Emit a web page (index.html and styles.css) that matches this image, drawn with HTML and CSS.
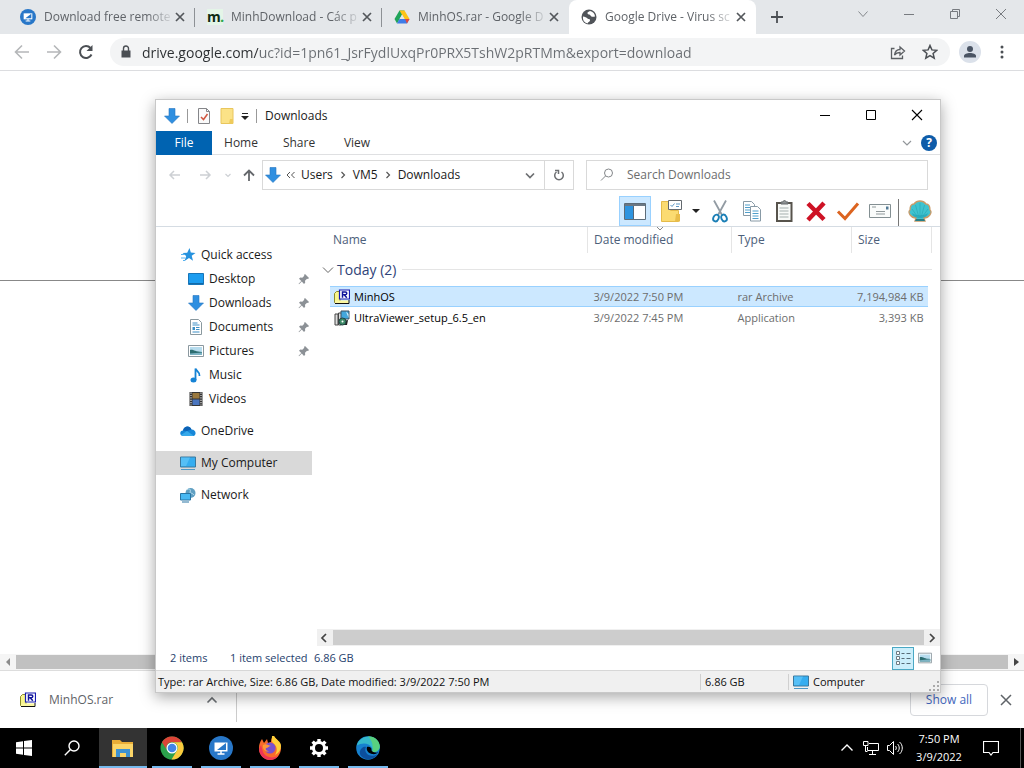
FILE: index.html
```html
<!DOCTYPE html>
<html lang="en">
<head>
    <meta charset="UTF-8">
    <title>Desktop</title>
    <link rel="stylesheet" href="styles.css">
</head>
<body>
    <!-- shared icons -->
    <svg class="sprite" aria-hidden="true">
        <symbol id="i-down" viewBox="0 0 16 16"><path d="M5 0.5h6v7.500h4.500L8 15.500 0.500 8H5z" fill="#2f8fe0" stroke="#2676bf" stroke-width=".6"/></symbol>
        <symbol id="i-close" viewBox="0 0 16 16"><path d="M4 4l8 8M12 4l-8 8" fill="none" stroke="currentColor" stroke-width="1.700"/></symbol>
        <symbol id="i-pin" viewBox="0 0 12 12"><path d="M7 1l4 4-1 1-1-.3-2 2 .2 2L6 11 3.800 8.500 1 11.200.600 10.800 3.300 8 1 5.800l1.300-1.200 2 .2 2-2L6 2z" fill="#8c9196"/></symbol>
        <symbol id="i-pc" viewBox="0 0 16 16"><path d="M.5 2h15v10H.5z" fill="#35adf0" stroke="#3b789d"/><path d="M1 2.500h9L6 11H1z" fill="#6acbfa" opacity=".6"/><path d="M1 14.500h14" stroke="#4c97c5"/></symbol>
        <symbol id="i-rar" viewBox="0 0 16 16"><path d="M.5 4.500l2-2H6v11H.5z" fill="#f8f58c" stroke="#8b8b2b"/><path d="M1 14h13.500v-2.500H1z" fill="#fbf7a0"/><path d="M1 14.500h14V11" fill="none" stroke="#111"/><path d="M5.500 1h10v9h-10z" fill="#fff" stroke="#161ab0" stroke-width="1.200"/><path d="M8.500 8.800V3h2.800c2 0 2 2.700 0 2.700H9M10.500 6l2.300 2.800" fill="none" stroke="#10149a" stroke-width="1.500"/></symbol>
        <symbol id="i-pic" viewBox="0 0 16 16"><path d="M.5 2.500h15v11H.5z" fill="#fff" stroke="#8b989f"/><path d="M2 4h12v8H2z" fill="#b7dcee"/><path d="M2 7c3-1 5 2 12 2v3H2z" fill="#2c6d71"/><path d="M2 10.500l12-1V12H2z" fill="#7cb3c4"/></symbol>
        <symbol id="i-uv" viewBox="0 0 24 24"><circle cx="12" cy="12" r="12" fill="#2877c8"/><path d="M5.500 6.500h13v9h-13z" fill="#fff"/><path d="M8 14l9-7v7z" fill="#2877c8"/><path d="M12 15v3M8.500 18h7" stroke="#fff" stroke-width="1.500"/></symbol>
    </svg>

    <div class="browser">
        <div class="tab-strip">
            <div class="tab">
                <svg class="icon"><use href="#i-uv"/></svg>
                <span class="tab-title">Download free remote</span>
                <button class="tab-close" aria-label="Close tab"><svg class="icon"><use href="#i-close"/></svg></button>
            </div>
            <div class="tab">
                <span class="favicon-m">m<i>.</i></span>
                <span class="tab-title">MinhDownload - Các p</span>
                <button class="tab-close" aria-label="Close tab"><svg class="icon"><use href="#i-close"/></svg></button>
            </div>
            <div class="tab">
                <svg class="icon" viewBox="0 0 16 16"><path d="M5.500 1.500h5L6 9.500l-3 5L.5 10z" fill="#20a45a"/><path d="M5.500 1.500h5l5 8.500h-5z" fill="#fdc317"/><path d="M5.500 10h10L13 14.500H3z" fill="#3e7ce8"/><path d="M11 10h4.500L13 14.500z" fill="#e4483c"/><path d="M8 5.500L5.500 10h5z" fill="#e4e7ea"/></svg>
                <span class="tab-title">MinhOS.rar - Google D</span>
                <button class="tab-close" aria-label="Close tab"><svg class="icon"><use href="#i-close"/></svg></button>
            </div>
            <div class="tab active">
                <svg class="icon" viewBox="0 0 16 16"><circle cx="8" cy="8" r="7.500" fill="#505459"/><path d="M2 7.500c2 0 3.500 1 4.500 2s3 0 2.500 2-2 1-2.500 3C3 13.500 1.500 11 2 7.500zM9 2c-1 1-3 1-2.500 2.500S9 5 9.500 6.500 12 8 14 7.500C14 5 12 2.500 9 2z" fill="#fff"/></svg>
                <span class="tab-title">Google Drive - Virus sc</span>
                <button class="tab-close" aria-label="Close tab"><svg class="icon"><use href="#i-close"/></svg></button>
            </div>
            <button class="new-tab" aria-label="New tab"><svg class="icon" viewBox="0 0 16 16"><path d="M8 2v12M2 8h12" stroke="#4b4f54" stroke-width="1.800"/></svg></button>
            <div class="browser-controls">
                <button aria-label="Search tabs"><svg class="icon" viewBox="0 0 16 16"><path d="M3.500 5.500L8 10.500l4.500-5" fill="none" stroke="#85898d"/></svg></button>
                <button aria-label="Minimize"><svg class="icon" viewBox="0 0 16 16"><path d="M3 8.500h10" stroke="#777b80"/></svg></button>
                <button aria-label="Restore"><svg class="icon" viewBox="0 0 16 16"><path d="M3.500 5.500h7v7h-7zM5.500 5.500v-2h7v7h-2" fill="none" stroke="#777b80"/></svg></button>
                <button aria-label="Close"><svg class="icon" viewBox="0 0 16 16"><path d="M3 3l10 10M13 3L3 13" stroke="#777b80"/></svg></button>
            </div>
        </div>

        <div class="nav-bar">
            <button class="nav-btn" aria-label="Back"><svg class="icon" viewBox="0 0 16 16"><path d="M15 8H1.500M8 1.500L1.500 8 8 14.500" fill="none" stroke="#b5b7b9" stroke-width="1.600"/></svg></button>
            <button class="nav-btn" aria-label="Forward"><svg class="icon" viewBox="0 0 16 16"><path d="M1 8h13.500M8 1.500L14.500 8 8 14.500" fill="none" stroke="#b5b7b9" stroke-width="1.600"/></svg></button>
            <button class="nav-btn" aria-label="Reload"><svg class="icon" viewBox="0 0 16 16"><path d="M13.500 10.500A6 6 0 1 1 12.500 4" fill="none" stroke="#4b4f54" stroke-width="2"/><path d="M14.500 1v6h-6z" fill="#4b4f54"/></svg></button>
            <div class="omnibox">
                <svg class="icon" viewBox="0 0 16 16"><path d="M3.500 6.500h9v7h-9z" fill="#4b4f54"/><path d="M5.500 7V4.500a2.500 2.500 0 0 1 5 0V7" fill="none" stroke="#4b4f54" stroke-width="1.400"/></svg>
                <input type="text" aria-label="Address" value="drive.google.com/uc?id=1pn61_JsrFydlUxqPr0PRX5TshW2pRTMm&amp;export=download">
                <button aria-label="Share"><svg class="icon" viewBox="0 0 16 16"><path d="M4.500 4.500h-3v10h11v-3" fill="none" stroke="#5b5f63" stroke-width="1.300"/><path d="M4.500 11C5 7.500 7 5.500 10 5.500V3l4.500 4L10 11V8.500C7.500 8.500 6 9 4.500 11z" fill="none" stroke="#5b5f63" stroke-width="1.300"/></svg></button>
                <button aria-label="Bookmark"><svg class="icon" viewBox="0 0 16 16"><path d="M8 1.500l1.900 4.400 4.800.4-3.600 3.200 1.100 4.700L8 11.700l-4.200 2.500 1.100-4.700L1.300 6.300l4.800-.4z" fill="none" stroke="#4b4f54" stroke-width="1.500"/></svg></button>
            </div>
            <button class="profile" aria-label="Profile"><svg class="icon" viewBox="0 0 16 16"><circle cx="8" cy="5" r="3" fill="#4a5464"/><path d="M2 13.500V12c0-4 12-4 12 0v1.500z" fill="#4a5464"/></svg></button>
            <button class="nav-btn" aria-label="Menu"><svg class="icon" viewBox="0 0 16 16"><g fill="#4b4f54"><circle cx="8" cy="3" r="1.500"/><circle cx="8" cy="8" r="1.500"/><circle cx="8" cy="13" r="1.500"/></g></svg></button>
        </div>

        <div class="page"><hr></div>

        <div class="page-scroll">
            <svg class="icon" viewBox="0 0 16 16"><path d="M10 4v8L6 8z" fill="#8c8c8c"/></svg>
            <div class="thumb"></div>
            <svg class="icon" viewBox="0 0 16 16"><path d="M6 4v8l5-4z" fill="#444"/></svg>
        </div>

        <div class="shelf">
            <div class="download">
                <svg class="icon"><use href="#i-rar"/></svg>
                <span>MinhOS.rar</span>
                <button aria-label="Options"><svg class="icon" viewBox="0 0 16 16"><path d="M3.500 10.500L8 6l4.500 4.500" fill="none" stroke="#6b6f73" stroke-width="1.600"/></svg></button>
            </div>
            <button class="show-all">Show all</button>
            <button class="shelf-close" aria-label="Close"><svg class="icon" viewBox="0 0 16 16"><path d="M3 3l10 10M13 3L3 13" stroke="#5f6368" stroke-width="1.500"/></svg></button>
        </div>
    </div>

    <div class="explorer">
        <div class="title-bar">
            <svg class="icon"><use href="#i-down"/></svg>
            <span class="bar"></span>
            <svg class="icon" viewBox="0 0 16 16"><path d="M2.500.5h8l3 3v12h-11z" fill="#fafafa" stroke="#85868a"/><path d="M10.500.5v3h3" fill="none" stroke="#85868a"/><path d="M5 9l2.500 2.500L11.500 6" fill="none" stroke="#d0563f" stroke-width="1.500"/></svg>
            <svg class="icon" viewBox="0 0 16 16"><path d="M2 .5h12v15H2z" fill="#fbe287" stroke="#e9c65c"/><path d="M11 11h3v4.500h-4z" fill="#efcb5b"/></svg>
            <svg class="caret" viewBox="0 0 8 8"><path d="M1 1.500h6" stroke="#222"/><path d="M0 4h8L4 8z" fill="#222"/></svg>
            <span class="bar"></span>
            <span class="title">Downloads</span>
            <div class="win-controls">
                <button aria-label="Minimize"><svg class="icon" viewBox="0 0 16 16"><path d="M3 8.500h10" stroke="#000"/></svg></button>
                <button aria-label="Maximize"><svg class="icon" viewBox="0 0 16 16"><path d="M3.500 3.500h9v9h-9z" fill="none" stroke="#000"/></svg></button>
                <button aria-label="Close"><svg class="icon" viewBox="0 0 16 16"><path d="M3 3l10 10M13 3L3 13" stroke="#000" stroke-width="1.100"/></svg></button>
            </div>
        </div>

        <div class="ribbon">
            <button class="file">File</button>
            <button>Home</button>
            <button>Share</button>
            <button>View</button>
            <svg class="icon ribbon-toggle" viewBox="0 0 16 16"><path d="M4 6l4 4 4-4" fill="none" stroke="#92969a" stroke-width="1.200"/></svg>
            <button class="help" aria-label="Help">?</button>
        </div>

        <div class="address-row">
            <button aria-label="Back"><svg class="icon" viewBox="0 0 16 16"><path d="M13 8H3M7 4L3 8l4 4" fill="none" stroke="#cdd0d4" stroke-width="1.500"/></svg></button>
            <button aria-label="Forward"><svg class="icon" viewBox="0 0 16 16"><path d="M3 8h10M9 4l4 4-4 4" fill="none" stroke="#cdd0d4" stroke-width="1.500"/></svg></button>
            <button class="recent" aria-label="Recent"><svg class="icon" viewBox="0 0 16 16"><path d="M5.500 7L8 9.500 10.500 7" fill="none" stroke="#cdd0d4" stroke-width="1.200"/></svg></button>
            <button class="up" aria-label="Up"><svg class="icon" viewBox="0 0 16 16"><path d="M8 14V4M3 8.500l5-5 5 5" fill="none" stroke="#65686c" stroke-width="1.800"/></svg></button>
            <div class="path">
                <svg class="icon"><use href="#i-down"/></svg>
                <svg class="chev" viewBox="0 0 12 12"><path d="M5 3L2 6l3 3M9.500 3l-3 3 3 3" fill="none" stroke="#555"/></svg>
                <span>Users</span>
                <svg class="chev" viewBox="0 0 12 12"><path d="M4.500 3l3 3-3 3" fill="none" stroke="#555" stroke-width="1.200"/></svg>
                <span>VM5</span>
                <svg class="chev" viewBox="0 0 12 12"><path d="M4.500 3l3 3-3 3" fill="none" stroke="#555" stroke-width="1.200"/></svg>
                <span>Downloads</span>
                <button class="history" aria-label="Previous locations"><svg class="icon" viewBox="0 0 16 16"><path d="M4 6.500l4 4 4-4" fill="none" stroke="#6d6f72" stroke-width="1.700"/></svg></button>
                <button class="refresh" aria-label="Refresh"><svg class="icon" viewBox="0 0 16 16"><path d="M10.500 5a4.300 4.300 0 1 1-5 0M4 3.500h3.500V7" fill="none" stroke="#6d6f72" stroke-width="1.500"/></svg></button>
            </div>
            <div class="search">
                <svg class="icon" viewBox="0 0 16 16"><circle cx="9.500" cy="6" r="4" fill="none" stroke="#84878a"/><path d="M6.500 9L2 13.500" stroke="#84878a"/></svg>
                <input type="text" aria-label="Search Downloads" placeholder="Search Downloads">
            </div>
        </div>

        <div class="tools">
            <button class="on" aria-label="Navigation pane"><svg class="tool-icon" viewBox="0 0 24 24"><path d="M1.500 4.500h21v16h-21z" fill="#fff" stroke="#5d6c78"/><path d="M2 5h20v2H2z" fill="#6b7884"/><path d="M2 7h8.500v13H2z" fill="#2e94df"/><path d="M10.500 7v13" stroke="#567"/></svg></button>
            <button class="wide" aria-label="Properties"><svg class="tool-icon" viewBox="0 0 24 24"><path d="M1.500 2.500h9v9h8v11h-17z" fill="#fbdb71" stroke="#e5bb4a"/><path d="M16 15h4v7.500h-5z" fill="#e9bd4a"/><path d="M8.500 1.500h13v9h-13z" fill="#fff" stroke="#63696e"/><path d="M10.500 6l1.500 1.500 2.500-3M16 5h4M16 7.500h3" fill="none" stroke="#5d97c5"/></svg><svg class="caret" viewBox="0 0 8 8"><path d="M0 2h8L4 6z" fill="#222"/></svg></button>
            <button aria-label="Cut"><svg class="tool-icon" viewBox="0 0 24 24"><path d="M6 1.500L14 16M18 1.500L10 16" stroke="#929ba3" stroke-width="1.800"/><ellipse cx="8" cy="19" rx="2.600" ry="3.500" transform="rotate(25 8 19)" fill="none" stroke="#1b7fb6" stroke-width="1.900"/><ellipse cx="16" cy="19" rx="2.600" ry="3.500" transform="rotate(-25 16 19)" fill="none" stroke="#1b7fb6" stroke-width="1.900"/></svg></button>
            <button aria-label="Copy"><svg class="tool-icon" viewBox="0 0 24 24"><g fill="#fff" stroke="#889aa6"><path d="M3.500 2.500h8l3 3v11h-11z"/><path d="M10.500 7.500h7l3 3v11.500h-10z"/></g><path d="M5 6h5M5 8.500h5M5 11h5M5 13.500h5M12.500 12h6M12.500 14.500h6M12.500 17h6M12.500 19.500h6" stroke="#4f9fcb"/></svg></button>
            <button aria-label="Paste"><svg class="tool-icon" viewBox="0 0 24 24"><path d="M5 4h14.500v18H5z" fill="#f8faf8" stroke="#57534c" stroke-width="2"/><path d="M9 5V3h2c0-2 3-2 3 0h2v2z" fill="#8d9293" stroke="#65686a"/><path d="M7.500 9h9M7.500 12h9M7.500 15h9M7.500 18h9" stroke="#a4afae"/></svg></button>
            <button aria-label="Delete"><svg class="tool-icon" viewBox="0 0 24 24"><path d="M4 4.500l16 16M20 4L4 21" stroke="#ce1225" stroke-width="4.500"/></svg></button>
            <button aria-label="Rename"><svg class="tool-icon" viewBox="0 0 24 24"><path d="M2 12.500l7 7L22 4.500" fill="none" stroke="#dc6420" stroke-width="3"/></svg></button>
            <button aria-label="Mail"><svg class="tool-icon" viewBox="0 0 24 24"><path d="M1.500 5.500h21v13h-21z" fill="#fafcfb" stroke="#838f92"/><path d="M4 8h4M8 12.500h9M8 15h9" stroke="#90999b"/><path d="M18 7.500h2.500v3H18z" fill="#527a96"/></svg></button>
            <span class="tool-bar"></span>
            <button class="shell" aria-label="Classic Shell"><svg class="tool-icon" viewBox="0 0 24 24"><path d="M7 22l1-3c-5 0-9-6-6-8 0-4 2-6 4-6 3-4 9-4 12 0 2 0 4 2 4 6 3 2-1 8-6 8l1 3z" fill="#3fc3d0" stroke="#c99a68" stroke-width="1.300"/><path d="M4 14c1 4 4 5 8 5s7-1 8-5c-4 3-12 3-16 0z" fill="#1c9fb4" opacity=".6"/><path d="M12 18V4M10.500 17L7.500 6M13.500 17L16.500 6M9 17l-5-7M15 17l5-7" stroke="#2aa5b0" stroke-width=".6"/><path d="M8 20h8l1 2H7z" fill="#267e85"/></svg></button>
        </div>

        <div class="panes">
            <ul class="sidebar">
                <li><a href="#"><svg class="icon" viewBox="0 0 16 16"><path d="M9.500 1l1.300 4.500 4.700.5-3.800 2.800 1.300 5L9 11l-4.500 3 1.700-5L2.500 6l4.700-.3z" fill="#2692de"/><path d="M1 7.500h4M1 11h4M3 13.500h2" stroke="#58b2ee"/></svg>Quick access</a></li>
                <li class="sub"><a href="#"><svg class="icon" viewBox="0 0 16 16"><path d="M.5 2.500h15v11H.5z" fill="#1c9df0" stroke="#1775b8"/><path d="M1 12.500h14" stroke="#1269a7"/></svg>Desktop</a><svg class="pin"><use href="#i-pin"/></svg></li>
                <li class="sub"><a href="#"><svg class="icon"><use href="#i-down"/></svg>Downloads</a><svg class="pin"><use href="#i-pin"/></svg></li>
                <li class="sub"><a href="#"><svg class="icon" viewBox="0 0 16 16"><path d="M2.500.5h8l3 3v12h-11z" fill="#fff" stroke="#8a999f"/><path d="M4.500 4h5M4.500 6h7M8 8.500h3.500M8 10.500h3.500M4.500 13h7" stroke="#3c8fc6"/><path d="M4.500 8h2.500v3H4.500z" fill="#3c8fc6"/></svg>Documents</a><svg class="pin"><use href="#i-pin"/></svg></li>
                <li class="sub"><a href="#"><svg class="icon"><use href="#i-pic"/></svg>Pictures</a><svg class="pin"><use href="#i-pin"/></svg></li>
                <li class="sub"><a href="#"><svg class="icon" viewBox="0 0 16 16"><path d="M7.500 13V1.500C8 4 12 4.500 11.500 9" fill="none" stroke="#1583d5" stroke-width="1.800"/><ellipse cx="5.500" cy="13" rx="3" ry="2.500" fill="#1583d5"/></svg>Music</a></li>
                <li class="sub"><a href="#"><svg class="icon" viewBox="0 0 16 16"><path d="M1.500 1h13v14h-13z" fill="#343434"/><path d="M4.500 2h7v5.500h-7z" fill="#9b793e"/><path d="M4.500 8.500h7V14h-7z" fill="#4a75bf"/><path d="M3 1.500v13M13 1.500v13" stroke="#ddd" stroke-width="1.200" stroke-dasharray="1.200 1.200"/></svg>Videos</a></li>
                <li class="root"><a href="#"><svg class="icon" viewBox="0 0 16 16"><path d="M3.500 13C-1 13-.5 7.500 3 7.500 4 2.500 10 2 11.500 6.500c5 0 5.500 6.500 1 6.500z" fill="#1787d8"/><path d="M1 12l6-4 7 5H3.500z" fill="#36a9ea"/><path d="M3 7.500C4 2.500 10 2 11.500 6.500L7 8z" fill="#0c62b5"/></svg>OneDrive</a></li>
                <li class="root selected"><a href="#"><svg class="icon"><use href="#i-pc"/></svg>My Computer</a></li>
                <li class="root"><a href="#"><svg class="icon" viewBox="0 0 16 16"><circle cx="10.500" cy="6" r="5" fill="#5f9fc2"/><path d="M7 3c3-3 4 1 3 2s3 1 4 3" fill="none" stroke="#bcdff0"/><path d="M.5 6.500h10v6.500H.5z" fill="#48b8f2" stroke="#2875a4"/><path d="M2 15h7" stroke="#2875a4"/></svg>Network</a></li>
            </ul>

            <div class="files">
                <table>
                    <colgroup><col class="c-gap"><col><col class="c-date"><col class="c-type"><col class="c-size"><col class="c-end"></colgroup>
                    <thead>
                        <tr><th class="gap"></th><th class="name">Name</th><th class="sorted">Date modified<svg class="sort" viewBox="0 0 8 4"><path d="M1 0l3 3 3-3" fill="none" stroke="#888"/></svg></th><th>Type</th><th>Size</th><th class="end"></th></tr>
                    </thead>
                    <tbody>
                        <tr class="group"><td colspan="6"><div class="group-label"><svg class="chev" viewBox="0 0 12 12"><path d="M1 3.500L6 8.500l5-5" fill="none" stroke="#666"/></svg><span>Today (2)</span></div></td></tr>
                        <tr class="row selected"><td class="gap"></td><td class="name"><svg class="icon"><use href="#i-rar"/></svg>MinhOS</td><td>3/9/2022 7:50 PM</td><td>rar Archive</td><td class="size">7,194,984 KB</td><td class="gap"></td></tr>
                        <tr class="row"><td class="gap"></td><td class="name"><svg class="icon" viewBox="0 0 16 16"><path d="M1 4h3v11H1zM4.500 3h3v12h-3z" fill="#ddd" stroke="#444"/><path d="M7 1h8v8H7z" fill="#43a7dc" stroke="#3c5060"/><path d="M12 1.500l2.500 2.500V8" fill="#d8f2ff"/><path d="M9 11l5-1-1 5H9z" fill="#222"/><circle cx="8.500" cy="11.500" r="3.500" fill="#3d8a67" stroke="#244"/><circle cx="8.500" cy="11.500" r="1" fill="#fff"/></svg>UltraViewer_setup_6.5_en</td><td>3/9/2022 7:45 PM</td><td>Application</td><td class="size">3,393 KB</td><td class="gap"></td></tr>
                    </tbody>
                </table>
                <div class="file-scroll">
                    <svg class="icon" viewBox="0 0 16 16"><path d="M9 4L5 8l4 4" fill="none" stroke="#444" stroke-width="1.700"/></svg>
                    <div class="thumb"></div>
                    <svg class="icon" viewBox="0 0 16 16"><path d="M6 4l4 4-4 4" fill="none" stroke="#444" stroke-width="1.700"/></svg>
                </div>
            </div>
        </div>

        <div class="status">
            <span class="count">2 items</span>
            <span class="picked">1 item selected</span>
            <span>6.86 GB</span>
            <button class="view on" aria-label="Details"><svg class="icon" viewBox="0 0 16 16"><path d="M1.500 1.500h3v3h-3zM1.500 6.500h3v3h-3zM1.500 11.500h3v3h-3z" fill="#fff" stroke="#6c7b83"/><path d="M6.500 3.500h3M11.500 3.500h4M6.500 8.500h3M11.500 8.500h4M6.500 13.500h3M11.500 13.500h4" stroke="#566b77"/></svg></button>
            <button class="view" aria-label="Large icons"><svg class="view-pic"><use href="#i-pic"/></svg></button>
        </div>

        <div class="info-bar">
            <span class="info">Type: rar Archive, Size: 6.86 GB, Date modified: 3/9/2022 7:50 PM</span>
            <span class="total">6.86 GB</span>
            <span class="zone"><svg class="icon"><use href="#i-pc"/></svg>Computer</span>
            <svg class="grip" viewBox="0 0 10 10"><g fill="#aaa"><path d="M8 0h2v2H8zM4 4h2v2H4zM8 4h2v2H8zM0 8h2v2H0zM4 8h2v2H4zM8 8h2v2H8z"/></g></svg>
        </div>
    </div>

    <div class="taskbar">
        <button class="start" aria-label="Start"><svg class="icon" viewBox="0 0 16 16"><path d="M0 2.200l7-1v6.300H0zM8 1l8-1v7.500H8zM0 8.500h7v6.300l-7-1zM8 8.500h8V16l-8-1z" fill="#fff"/></svg></button>
        <button class="find" aria-label="Search"><svg class="icon" viewBox="0 0 16 16"><circle cx="10" cy="6" r="5" fill="none" stroke="#fff" stroke-width="1.400"/><path d="M6.500 9.500L.8 15.200" stroke="#fff" stroke-width="1.400"/></svg></button>
        <button class="app current" aria-label="File Explorer"><svg class="app-icon" viewBox="0 0 24 24"><path d="M1 4h8l2 2h11v15H1z" fill="#e9ad37"/><path d="M2 8h20v13H2z" fill="#fbd568"/><path d="M5 13h14v8h-4v-4H9v4H5z" fill="#3e92d2"/></svg></button>
        <button class="app" aria-label="Chrome"><svg class="app-icon" viewBox="0 0 24 24"><circle cx="12" cy="12" r="11.500" fill="#2ba14b"/><path d="M2 6.200a11.500 11.500 0 0 1 20 0H12a5.500 5.500 0 0 0-5 8z" fill="#dc4437"/><path d="M22 6.200A11.500 11.500 0 0 1 11.500 23.500L17 14.500a5.500 5.500 0 0 0-5-8.300z" fill="#fbca3d"/><circle cx="12" cy="12" r="5.500" fill="#fff"/><circle cx="12" cy="12" r="4.300" fill="#4285e8"/></svg></button>
        <button class="app" aria-label="UltraViewer"><svg class="app-icon"><use href="#i-uv"/></svg></button>
        <button class="app" aria-label="Firefox"><svg class="app-icon" viewBox="0 0 24 24"><path d="M1 12c0-4 1-6 3-9l2 4 3-4 1 4 3-1c0-3 1-5 3-6 1 3 7 6 7 12 0 7-5 12-11 12S1 19 1 12z" fill="#fa6b2b"/><path d="M14 0c0 3-1 4 1 7 4 3 5 7 2 12 4-2 6-5 6-9C23 5 18 4 16 0z" fill="#ffcf38"/><path d="M1 13c0 6 5 11 11 11 3 0 6-1 8-4-6 3-13 1-15-4L3 9z" fill="#ee3555"/><circle cx="12" cy="12" r="5.500" fill="#7950cd"/><path d="M5 9c3-2 5 0 8 1-2 0-3 2-5 2-1 2 1 3 3 3-3 2-7-2-6-6z" fill="#ff9838"/></svg></button>
        <button class="app" aria-label="Settings"><svg class="app-icon" viewBox="0 0 24 24"><circle cx="12" cy="12" r="5.500" fill="none" stroke="#fff" stroke-width="3"/><path d="M12 3v3M12 18v3M3 12h3M18 12h3M5.600 5.600l2.200 2.200M16.200 16.200l2.200 2.200M5.600 18.400l2.200-2.200M16.200 7.800l2.200-2.200" stroke="#fff" stroke-width="3.400"/></svg></button>
        <button class="app" aria-label="Edge"><svg class="app-icon" viewBox="0 0 24 24"><circle cx="12" cy="12" r="11.800" fill="#1681cf"/><path d="M1 9C4-2 22-3 23.800 10c0 5-4 7-8 5.500 1-1 1-2 0-4-3-5-10-5-15-2z" fill="#35b9cb"/><path d="M12 .2c7 0 12 5 11.800 10.500-.5 4-4 6-8 5 2-3 1-11-3.800-15.500z" fill="#64d865" opacity=".75"/><path d="M10 11c-3 6 4 12 12 7-6 9-20 5-18-3 1-3 4-5 6-4z" fill="#0c4f9d"/><path d="M11 11c-1 3 1 6 5 7 3 .5 5-.5 6.500-1.500-3 .5-7-.5-7-2.500.5-2-2-4-4.500-3z" fill="#000"/></svg></button>

        <div class="tray">
            <button aria-label="Show hidden icons"><svg class="icon" viewBox="0 0 16 16"><path d="M2.500 10.500L8 5l5.500 5.500" fill="none" stroke="#fff" stroke-width="1.400"/></svg></button>
            <button aria-label="Network"><svg class="icon" viewBox="0 0 16 16"><path d="M6 3.500h9.500v7H4.500V7M9.500 10.500v4M6 14.500h7M.5 1.500h4.500v4H.5zM2.500 5.500v6h2" fill="none" stroke="#fff"/></svg></button>
            <button aria-label="Volume"><svg class="icon" viewBox="0 0 16 16"><path d="M.5 5.500h2l4-4v13l-4-4h-2zM8.500 6c1 1 1 3 0 4M10.500 4c2.300 2 2.300 6 0 8M12.500 2c3.700 3 3.700 9 0 12" fill="none" stroke="#fff"/></svg></button>
            <div class="clock"><div>7:50 PM</div><div>3/9/2022</div></div>
            <button class="notify" aria-label="Notifications"><svg class="icon" viewBox="0 0 16 16"><path d="M.5 1.500h15v11H10L8 15l-2-2.500H.5z" fill="none" stroke="#fff" stroke-width="1.200"/></svg></button>
            <span class="show-desktop"></span>
        </div>
    </div>
</body>
</html>
```

FILE: styles.css
```css
* { box-sizing: border-box; }
body { margin: 0; height: 100vh; display: flex; flex-direction: column; position: relative; overflow: hidden; font-family: "Open Sans", "Noto Sans", sans-serif; font-size: 12px; line-height: 16px; color: #1a1a1a; background: #fff; }
button { margin: 0; padding: 0; border: none; background: none; font: inherit; color: inherit; display: flex; align-items: center; justify-content: center; flex-shrink: 0; }
input { border: none; outline: none; background: none; font: inherit; padding: 0; min-width: 0; }
a { color: inherit; text-decoration: none; }
svg { display: block; flex-shrink: 0; }
.sprite { position: absolute; width: 0; height: 0; }
.icon { width: 16px; height: 16px; }
.caret { width: 8px; height: 8px; }
.chev { width: 12px; height: 12px; }

/* browser behind */
.browser { flex: 1; min-height: 0; display: flex; flex-direction: column; }
.tab-strip { height: 34px; display: flex; background: #e4e7ea; padding-left: 8px; color: #5f6368; }
.tab { flex: 0 1 187px; min-width: 0; display: flex; align-items: center; padding: 0 7px 0 12px; position: relative; }
.tab:not(.active):not(:nth-child(3))::after { content: ""; position: absolute; right: 0; top: 8px; height: 19px; border-right: 1px solid #8d9195; }
.tab.active { background: #fff; border-radius: 8px 8px 0 0; }
.tab-title { flex: 1; min-width: 0; margin-left: 8px; white-space: nowrap; mask-image: linear-gradient(to right, #000 80%, rgba(0, 0, 0, .1)); }
.tab-close { width: 16px; color: #53575b; }
.favicon-m { width: 16px; text-align: center; font-size: 14px; font-weight: 700; color: #0d2a14; background: #e4f5e8; }
.favicon-m i { color: #2ca84c; }
.new-tab { width: 28px; margin-left: 7px; }
.browser-controls { margin-left: auto; display: flex; height: 28px; }
.browser-controls button { width: 46px; }

.nav-bar { height: 37px; display: flex; align-items: center; padding: 0 6px; background: #fff; border-bottom: 1px solid #dcdde0; }
.nav-btn { width: 32px; height: 28px; }
.omnibox { flex: 1; height: 28px; margin: 0 3px 0 8px; padding: 0 8px; display: flex; align-items: center; gap: 8px; border-radius: 14px; background: #f3f4f5; }
.omnibox input { flex: 1; height: 28px; font-size: 14px; color: transparent; background: linear-gradient(to right, #2b2e31 118px, #6a6e73 118px); background-clip: text; }
.omnibox button { width: 24px; }
.profile { width: 22px; height: 22px; margin: 0 5px 0 6px; border-radius: 50%; background: #dbe1ea; }

.page { flex: 1; min-height: 0; overflow: hidden; }
.page hr { margin: 209px 0 0; border: none; border-top: 1px solid #888; }
.page-scroll { height: 17px; display: flex; align-items: center; background: #f5f5f5; border-bottom: 1px solid #ddd; }
.thumb { flex: 1; align-self: stretch; margin: 1px 0; background: #c1c1c1; }

.shelf { height: 57px; display: flex; align-items: center; padding-right: 10px; }
.download { width: 237px; height: 44px; padding: 0 16px 0 20px; display: flex; align-items: center; border-right: 1px solid #ccc; color: #5f6368; }
.download span { flex: 1; margin-left: 13px; }
.show-all { margin-left: auto; width: 78px; height: 32px; border: 1px solid #d6d8dc; border-radius: 4px; color: #3f66bd; }
.shelf-close { width: 16px; margin-left: 10px; }

/* file explorer window */
.explorer { position: absolute; top: 99px; right: 83px; bottom: 75px; left: 155px; display: flex; flex-direction: column; background: #fff; border: 1px solid #c8c8c8; box-shadow: 0 4px 14px rgba(0, 0, 0, .35); }
.title-bar { height: 31px; display: flex; align-items: center; padding-left: 8px; }
.title-bar .bar { margin: 0 8px 0 7px; height: 14px; border-left: 1px solid #999; }
.title-bar .icon + .icon { margin-left: 7px; }
.title-bar .caret { margin-left: 6px; }
.win-controls { margin-left: auto; align-self: flex-start; display: flex; height: 30px; }
.win-controls button { width: 46px; }

.ribbon { height: 24px; display: flex; align-items: center; border-bottom: 1px solid #dfe0e2; padding-right: 3px; color: #333; }
.ribbon button { width: 58px; height: 24px; }
.ribbon .file { width: 56px; background: #0063b1; color: #fff; }
.ribbon-toggle { margin-left: auto; margin-right: 6px; }
.ribbon .help { width: 16px; height: 16px; border-radius: 50%; background: #0e5ca9; color: #fff; font-weight: 700; }

.address-row { height: 39px; display: flex; align-items: center; padding: 0 12px 0 4px; }
.address-row > button { width: 30px; }
.address-row > .recent { width: 16px; }
.address-row > .up { width: 26px; }
.path { flex: 308; height: 30px; display: flex; align-items: center; gap: 4px; border: 1px solid #d9d9d9; padding-left: 2px; }
.path button { height: 28px; }
.path .history { width: 24px; margin-left: auto; margin-right: -2px; }
.path .refresh { width: 29px; border-left: 1px solid #d9d9d9; }
.search { flex: 328; height: 30px; margin-left: 12px; display: flex; align-items: center; gap: 12px; padding-left: 12px; border: 1px solid #d9d9d9; }
.search input { flex: 1; }
.search input::placeholder { color: #6d6d6d; opacity: 1; }

.tools { height: 33px; display: flex; justify-content: flex-end; align-items: flex-end; padding-right: 4px; border-bottom: 1px solid #d5dce3; }
.tools button { width: 32px; height: 30px; }
.tools .on { background: #cce8ff; border: 1px solid #99d1ff; }
.tools .wide { width: 48px; margin-left: 5px; gap: 8px; }
.tool-icon { width: 24px; height: 24px; }
.tool-bar { height: 27px; margin-left: 2px; border-left: 1px solid #777; }
.tools .shell { margin-left: 5px; }

.panes { flex: 1; min-height: 0; display: flex; }
.sidebar { width: 156px; flex-shrink: 0; margin: 0 5px 0 0; padding: 16px 0 0; list-style: none; }
.sidebar li { height: 24px; display: flex; align-items: center; padding-left: 24px; }
.sidebar a { display: flex; align-items: center; gap: 5px; }
.sidebar .sub { padding-left: 32px; }
.sidebar .root { margin-top: 8px; }
.sidebar .selected { background: #d9d9d9; }
.pin { width: 12px; height: 12px; margin-left: auto; margin-right: 2px; }

.files { flex: 1; min-width: 0; display: flex; flex-direction: column; }
.files table { width: calc(100% - 13px); margin-left: 5px; border-collapse: collapse; table-layout: fixed; color: #6d6d6d; }
.c-gap { width: 8px; }
.c-date { width: 144px; }
.c-type { width: 120px; }
.c-size { width: 76px; }
.c-end { width: 4px; }
th { height: 26px; padding: 0 6px; text-align: left; font-weight: 400; color: #4c607a; border-left: 1px solid #e5e5e5; }
th.gap, th.name, th.end { padding: 0; border-left: none; }
th.end { border-right: 1px solid #e5e5e5; }
th.name { padding-left: 3px; }
.sorted { position: relative; }
.sort { position: absolute; top: 0; left: 68px; width: 8px; height: 4px; }
.group td { height: 33px; padding: 0; }
.group-label { display: flex; align-items: center; gap: 3px; font-size: 14px; color: #2f4378; }
.group-label::after { content: ""; flex: 1; margin-left: 3px; border-top: 1px solid #e5e5e5; }
.row td { height: 21px; padding: 0 6px; font-size: 11px; white-space: nowrap; }
.row td.gap { padding: 0; }
.row td.name { display: flex; align-items: center; gap: 4px; padding: 0 4px; color: #000; }
.row td.size { text-align: right; padding: 0 4px 0 0; }
.row.selected td:not(.gap) { background: #cce8ff; box-shadow: inset 0 1px #99d1ff, inset 0 -1px #99d1ff; }
.file-scroll { height: 17px; margin-top: auto; display: flex; align-items: center; background: #f0f0f0; }
.file-scroll .thumb { background: #cdcdcd; }

.status { height: 24px; flex-shrink: 0; display: flex; align-items: center; padding: 0 4px 0 14px; font-size: 11px; color: #26416d; }
.status .count { width: 60px; }
.status .picked { width: 84px; }
.view { width: 22px; height: 23px; }
.view.on { margin-left: auto; background: #cbeefb; border: 1px solid #4aa8c4; }
.view-pic { width: 14px; height: 14px; }
.info-bar { height: 22px; flex-shrink: 0; display: flex; align-items: center; background: #f0f0f0; border-top: 1px solid #d7d7d7; font-size: 11px; color: #111; }
.info { flex: 1; padding-left: 2px; }
.total { width: 88px; padding-left: 4px; border-left: 1px solid #d0d0d0; }
.zone { width: 141px; padding-left: 4px; display: flex; align-items: center; gap: 4px; border-left: 1px solid #d0d0d0; }
.grip { width: 10px; height: 10px; align-self: flex-end; margin: 0 1px 1px 0; }

/* taskbar */
.taskbar { height: 40px; flex-shrink: 0; display: flex; background: #000; color: #fff; }
.start { width: 48px; }
.find { width: 48px; margin-right: 3px; }
.app { width: 48px; margin-right: 1px; position: relative; }
.app::after { content: ""; position: absolute; left: 4px; right: 4px; bottom: 0; height: 2px; background: #76b9ed; }
.app.current { background: #333; }
.app.current::after { left: 0; right: 0; }
.app-icon { width: 24px; height: 24px; }
.tray { margin-left: auto; display: flex; align-items: center; }
.tray button { width: 24px; height: 40px; }
.clock { width: 64px; text-align: center; font-size: 11px; line-height: 18px; }
.tray .notify { width: 40px; }
.show-desktop { width: 9px; height: 40px; margin-left: 4px; }
.show-desktop::before { content: ""; display: block; width: 5px; height: 40px; border-right: 1px solid #555; }
```
